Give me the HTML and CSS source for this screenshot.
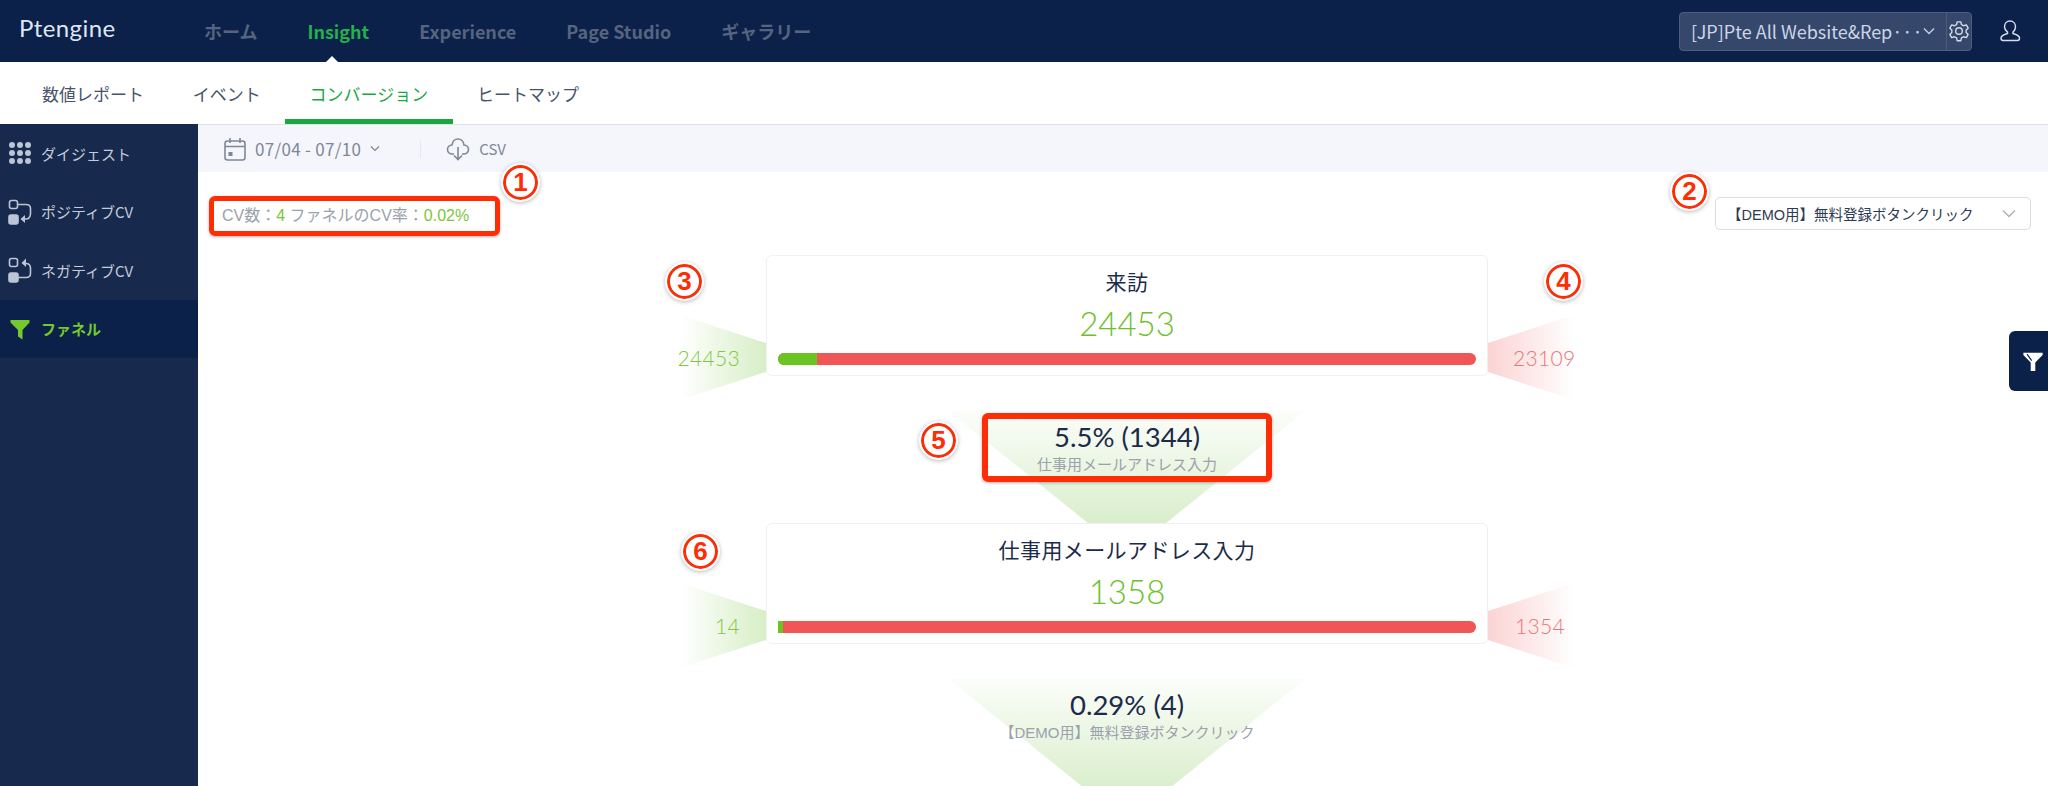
FILE: index.html
```html
<!DOCTYPE html>
<html lang="ja">
<head>
    <meta charset="UTF-8">
    <title>Ptengine Insight</title>
    <link rel="stylesheet" href="styles.css">
</head>
<body>
    <header class="topbar">
        <div class="logo">Ptengine</div>
        <nav class="topnav">
            <a>ホーム</a>
            <a class="active">Insight</a>
            <a>Experience</a>
            <a>Page Studio</a>
            <a>ギャラリー</a>
        </nav>
        <div class="site-select">
            <div class="site-name">
                <span>[JP]Pte All Website&amp;Rep···</span>
                <svg class="chev" width="12" height="8" viewBox="0 0 12 8"><path d="M1 1.500l5 5 5-5" fill="none" stroke="#c5cfe0" stroke-width="1.4"/></svg>
            </div>
            <div class="site-gear">
                <svg width="22" height="22" viewBox="0 0 24 24" fill="none" stroke="#d5dcea" stroke-width="1.5" stroke-linejoin="round"><circle cx="12" cy="12" r="3.6"/><path d="M10 2h4l.7 3 2.3 1.3 3-.9 2 3.5-2.2 2.1v2.6l2.2 2.1-2 3.5-3-.9-2.3 1.3-.7 3h-4l-.7-3L7 18.300l-3 .9-2-3.500 2.200-2.100v-2.600L2 8.900l2-3.500 3 .9 2.300-1.300z"/></svg>
            </div>
        </div>
        <svg class="user" width="24" height="24" viewBox="0 0 24 24" fill="none" stroke="#d5dcea" stroke-width="1.5"><path d="M12 2c3.300 0 5.500 2.500 5.500 5.800 0 2.400-1 4.200-2.500 5.400v1.300c2.500.8 6.500 1.800 6.500 4.500 0 1.800-.8 2.500-2 2.500H5c-1.200 0-2-.7-2-2.500 0-2.700 4-3.700 6.500-4.500v-1.300C8 12 6.500 10.200 6.500 7.800 6.500 4.500 8.700 2 12 2z"/></svg>
    </header>

    <nav class="subnav">
        <a>数値レポート</a>
        <a>イベント</a>
        <a class="active">コンバージョン</a>
        <a>ヒートマップ</a>
    </nav>

    <div class="main">
        <aside class="sidebar">
            <a class="side-item">
                <svg width="24" height="24" viewBox="0 0 24 24" fill="#bcc5d5"><circle cx="4" cy="4" r="3"/><circle cx="12" cy="4" r="3"/><circle cx="20" cy="4" r="3"/><circle cx="4" cy="12" r="3"/><circle cx="12" cy="12" r="3"/><circle cx="20" cy="12" r="3"/><circle cx="4" cy="20" r="3"/><circle cx="12" cy="20" r="3"/><circle cx="20" cy="20" r="3"/></svg>
                ダイジェスト
            </a>
            <a class="side-item">
                <svg width="24" height="26" viewBox="0 0 24 26" fill="none" stroke="#bcc5d5" stroke-width="1.6"><rect x="1.500" y="1.500" width="8" height="8" rx="2"/><rect x="1" y="16" width="9" height="9" rx="2" fill="#bcc5d5"/><path d="M10 5.500h8c3 0 4.500 1.500 4.500 4v5c0 3-1.500 5.500-5 5.500h-2"/><path d="M17 16l-4.500 4 4.500 4z" fill="#bcc5d5" stroke="none"/></svg>
                ポジティブCV
            </a>
            <a class="side-item">
                <svg width="24" height="26" viewBox="0 0 24 26" fill="none" stroke="#bcc5d5" stroke-width="1.600"><rect x="1.500" y="1.500" width="8" height="8" rx="2"/><rect x="1" y="16" width="9" height="9" rx="2" fill="#bcc5d5"/><path d="M10 20.500h8c3 0 4.500-1.500 4.500-4v-5c0-3-1.500-5-4.500-5"/><path d="M18 1.500l-4.500 4.500 4.500 4z" fill="#bcc5d5" stroke="none"/></svg>
                ネガティブCV
            </a>
            <a class="side-item active">
                <svg width="24" height="24" viewBox="0 0 24 24" fill="#75c92c"><path d="M2.500 3h19v2.500l-7 7.500v9.500l-4.500-3v-6.500l-7.500-7.500z"/></svg>
                ファネル
            </a>
        </aside>

        <section class="content">
            <div class="toolbar">
                <svg width="22" height="24" viewBox="0 0 22 24" fill="none" stroke="#7f8797" stroke-width="1.600"><rect x="1" y="4" width="20" height="19" rx="2.500"/><path d="M1 9.500h20M6 1v5M16 1v5"/><rect x="4.500" y="15" width="4" height="4" fill="#7f8797" stroke="none"/></svg>
                <span class="date">07/04 - 07/10</span>
                <svg class="date-chev" width="10" height="7" viewBox="0 0 10 7"><path d="M1 1.500l4 4 4-4" fill="none" stroke="#7f8797" stroke-width="1.200"/></svg>
                <span class="tool-sep"></span>
                <svg width="24" height="24" viewBox="0 0 24 24" fill="none" stroke="#7f8797" stroke-width="1.600"><path d="M8 17H6.500C3.500 17 1.500 15 1.500 12.500S3.500 8 6 8c.5-3.500 3-6 6-6s5.500 2.500 6 6c2.500 0 4.500 2 4.500 4.500S20.500 17 17.500 17H16"/><path d="M12 10v12M8 18.500l4 4 4-4"/></svg>
                <span class="csv">CSV</span>
            </div>

            <div class="report">
                <div class="summary">
                    <div class="cv-box">CV数：<em>4</em> ファネルのCV率：<em>0.02%</em></div>
                    <div class="goal-select">
                        <span>【DEMO用】無料登録ボタンクリック</span>
                        <svg width="14" height="9" viewBox="0 0 14 9"><path d="M1 1.500l6 6 6-6" fill="none" stroke="#a9aeb8" stroke-width="1.300"/></svg>
                    </div>
                </div>

                <div class="funnel">
                    <div class="stage">
                        <div class="wing in"><span>24453</span></div>
                        <div class="card">
                            <div class="card-title">来訪</div>
                            <div class="card-num">24453</div>
                            <div class="bar bar-round"><div class="bar-in bar-first"></div></div>
                        </div>
                        <div class="wing out"><span>23109</span></div>
                    </div>
                    <div class="step">
                        <div class="step-text marked">
                            <div class="step-num">5.5% (1344)</div>
                            <div class="step-name">仕事用メールアドレス入力</div>
                        </div>
                    </div>
                    <div class="stage">
                        <div class="wing in"><span>14</span></div>
                        <div class="card">
                            <div class="card-title">仕事用メールアドレス入力</div>
                            <div class="card-num">1358</div>
                            <div class="bar"><div class="bar-in bar-second"></div></div>
                        </div>
                        <div class="wing out short"><span>1354</span></div>
                    </div>
                    <div class="step">
                        <div class="step-text">
                            <div class="step-num">0.29% (4)</div>
                            <div class="step-name">【DEMO用】無料登録ボタンクリック</div>
                        </div>
                    </div>
                </div>
            </div>
        </section>
    </div>

    <div class="filter-tab">
        <svg width="22" height="22" viewBox="0 0 24 24" fill="#fff"><path d="M1.500 3h21v2.500l-8 8v9.500h-5v-9.500l-8-8z"/><path d="M5.500 4.500l5 7" stroke="#0b2149" stroke-width="1.300"/></svg>
    </div>

    <!-- annotation markers on top of the screenshot -->
    <span class="badge badge-1">1</span>
    <span class="badge badge-2">2</span>
    <span class="badge badge-3">3</span>
    <span class="badge badge-4">4</span>
    <span class="badge badge-5">5</span>
    <span class="badge badge-6">6</span>
</body>
</html>
```

FILE: styles.css
```css
* {
    box-sizing: border-box;
}
html, body {
    margin: 0;
    height: 786px;
    overflow: hidden;
}
body {
    position: relative;
    background: #fff;
    font-family: "Noto Sans CJK JP", "Noto Sans", sans-serif;
    color: #1d2b4a;
}

/* top bar */
.topbar {
    height: 62px;
    background: #0b2149;
    display: flex;
    align-items: center;
    position: relative;
}
.topbar::after {
    content: "";
    position: absolute;
    left: 326px;
    bottom: 0;
    border: 6px solid transparent;
    border-top: 0;
    border-bottom-color: #fff;
}
.logo {
    width: 204px;
    padding-left: 19px;
    font-family: Lato, sans-serif;
    font-size: 24px;
    letter-spacing: .4px;
    color: #dfe6f2;
    margin-top: -8px;
}
.topnav {
    display: flex;
    gap: 50px;
    font-size: 18px;
    font-weight: 700;
    color: #56647f;
    white-space: nowrap;
}
.topnav .active {
    color: #22b24c;
}
.site-select {
    margin-left: auto;
    width: 293px;
    height: 39px;
    display: flex;
    background: #35486c;
    border: 1px solid #4b5d80;
    border-radius: 4px;
    color: #cdd6e6;
    font-size: 18px;
}
.site-name {
    flex: 1;
    display: flex;
    align-items: center;
    justify-content: space-between;
    padding: 0 11px;
    white-space: nowrap;
}
.site-gear {
    width: 44px;
    display: flex;
    align-items: center;
    justify-content: center;
    border-left: 1px solid #4b5d80;
}
.user {
    margin: 0 26px 0 26px;
}

/* second level nav */
.subnav {
    height: 62px;
    padding-left: 17.600px;
    display: flex;
    font-size: 17px;
    color: #47536b;
}
.subnav a {
    padding: 0 24.400px;
    line-height: 64px;
    height: 62px;
}
.subnav .active {
    color: #18a83f;
    border-bottom: 5px solid #18a83f;
}

.main {
    display: flex;
    height: 662px;
}

/* sidebar */
.sidebar {
    width: 198px;
    flex: none;
    background: #17294d;
}
.side-item {
    height: 58.500px;
    display: flex;
    align-items: center;
    gap: 9px;
    padding-left: 8px;
    font-size: 15px;
    color: #c3cbd9;
}
.side-item svg {
    flex: none;
}
.side-item.active {
    background: #0b2149;
    color: #75c92c;
    font-weight: 700;
}

.content {
    flex: 1;
    min-width: 0;
}

/* date / csv toolbar */
.toolbar {
    height: 48px;
    background: #f4f6fc;
    border-top: 1px solid #dfe2e8;
    display: flex;
    align-items: center;
    padding-left: 26px;
    color: #7f8797;
    font-size: 17px;
}
.date {
    margin-left: 9px;
    letter-spacing: .3px;
}
.date-chev {
    margin-left: 9px;
}
.tool-sep {
    width: 1px;
    height: 18px;
    background: #e4e7ef;
    margin: 0 25px 0 40px;
}
.csv {
    margin-left: 9px;
    font-size: 15px;
}

.report {
    padding-top: 24px;
}
.summary {
    display: flex;
    justify-content: space-between;
    align-items: flex-start;
    padding: 0 17px 0 11px;
}
.cv-box {
    width: 291px;
    height: 40px;
    border: 5px solid #ff2d05;
    border-radius: 6px;
    box-shadow: 0 1px 3px rgba(0,0,0,.3);
    padding-left: 8px;
    line-height: 29px;
    font-family: "Liberation Sans", "Noto Sans CJK JP", sans-serif;
    font-size: 16px;
    color: #9aa1ad;
    white-space: nowrap;
}
.cv-box em {
    font-style: normal;
    color: #7cc63c;
}
.goal-select {
    width: 316px;
    height: 33px;
    margin-top: 1px;
    border: 1px solid #d9dce2;
    border-radius: 5px;
    display: flex;
    align-items: center;
    justify-content: space-between;
    padding: 0 14px 0 11px;
    font-family: "Liberation Sans", "Noto Sans CJK JP", sans-serif;
    font-size: 14.500px;
    color: #2d3a52;
    white-space: nowrap;
}

/* funnel */
.funnel {
    display: flex;
    flex-direction: column;
    align-items: center;
    padding-left: 8px;
    margin-top: 19px;
}
.stage {
    display: flex;
    align-items: flex-end;
}
.card {
    width: 722px;
    height: 121px;
    background: #fff;
    border: 1px solid #eef0f3;
    border-radius: 6px;
    padding: 0 11px;
    text-align: center;
    position: relative;
    z-index: 1;
}
.card-title {
    margin-top: 9px;
    height: 32px;
    line-height: 32px;
    font-size: 21px;
    letter-spacing: .4px;
    color: #1d2b4a;
}
.card-num {
    height: 44px;
    line-height: 44px;
    margin-top: 4px;
    font-family: Lato, sans-serif;
    font-weight: 300;
    font-size: 33px;
    color: #6cc12a;
}
.bar {
    margin-top: 8px;
    height: 12px;
    background: #f05656;
    border-radius: 0 6px 6px 0;
}
.bar-round {
    border-radius: 6px;
}
.bar-in {
    height: 12px;
    background: #6cc422;
}
.bar-first {
    width: 39px;
    border-radius: 6px 0 0 6px;
}
.bar-second {
    width: 5px;
}
.wing {
    width: 86px;
    height: 85px;
    margin-bottom: -24px;
    position: relative;
    display: flex;
    align-items: center;
    font-family: Lato, sans-serif;
    font-weight: 300;
    font-size: 21px;
}
.wing::before {
    content: "";
    position: absolute;
    top: 0;
    bottom: 0;
    left: 0;
    right: 0;
}
.wing span {
    position: relative;
    letter-spacing: .3px;
}
.wing.in {
    justify-content: flex-end;
    padding-right: 26px;
    color: #7fc83e;
}
.wing.in::before {
    background: linear-gradient(to left, #d7eec6, rgba(215,238,198,0));
    clip-path: polygon(0 0, 100% 33%, 100% 67%, 0 100%);
}
.wing.out {
    padding-left: 25px;
    color: #e87676;
}
.wing.out span {
    white-space: nowrap;
}
.wing.out::before {
    background: linear-gradient(to right, #fbd3d3, rgba(251,211,211,0));
    clip-path: polygon(0 33%, 100% 0, 100% 100%, 0 67%);
}
.wing.short {
    padding-left: 27px;
}
.step {
    width: 356px;
    height: 112px;
    margin-top: 35px;
    padding-top: 2px;
    position: relative;
    display: flex;
    flex-direction: column;
    align-items: center;
}
.step::before {
    content: "";
    position: absolute;
    top: 0;
    bottom: 0;
    left: 0;
    right: 0;
    background: linear-gradient(to bottom, rgba(220,240,206,.1), #d9eecb);
    clip-path: polygon(0 0, 100% 0, 61% 100%, 39% 100%);
}
.step-text {
    position: relative;
    flex: none;
    width: 290px;
    height: 69px;
    border: 6px solid transparent;
    text-align: center;
    white-space: nowrap;
}
.step-text.marked {
    border-color: #ff2d05;
    border-radius: 6px;
    box-shadow: 0 1px 3px rgba(0,0,0,.3);
}
.step-num {
    font-family: Lato, sans-serif;
    font-size: 27.500px;
    line-height: 35px;
    color: #1d2b4a;
}
.step-name {
    font-family: "Liberation Sans", "Noto Sans CJK JP", sans-serif;
    font-size: 15px;
    line-height: 22px;
    color: #9aa1ad;
}

/* floating filter tab */
.filter-tab {
    position: absolute;
    right: 0;
    top: 331px;
    width: 39px;
    height: 60px;
    padding-left: 9px;
    background: #0b2149;
    border-radius: 6px 0 0 6px;
    display: flex;
    align-items: center;
    justify-content: center;
}

/* annotation badges */
.badge {
    position: absolute;
    width: 35px;
    height: 35px;
    border-radius: 50%;
    border: 3px solid #ff2d05;
    outline: 2px solid #fff;
    box-shadow: 0 1px 4px 2px rgba(0,0,0,.28);
    background: #fff;
    color: #ff2d05;
    font-family: "Liberation Sans", sans-serif;
    font-weight: 700;
    font-size: 26px;
    line-height: 29px;
    text-align: center;
}
.badge-1 { left: 503px; top: 165px; }
.badge-2 { left: 1672px; top: 174px; }
.badge-3 { left: 667px; top: 264px; }
.badge-4 { left: 1546px; top: 264px; }
.badge-5 { left: 921px; top: 423px; }
.badge-6 { left: 683px; top: 534px; }
```
